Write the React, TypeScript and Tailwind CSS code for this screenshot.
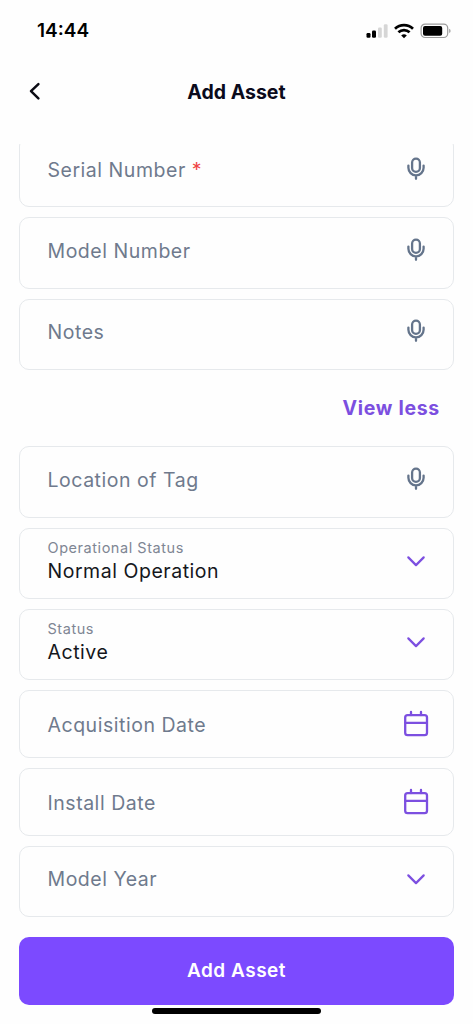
import React from "react";

type FieldKind = "voice" | "select" | "date";

interface FieldProps {
  label: string;
  kind: FieldKind;
  value?: string;
  required?: boolean;
}

// --- Icons ---
const MicIcon = () => (
  <svg width="26" height="26" viewBox="0 0 26 26" fill="none" stroke="#64748b" strokeWidth="2.3" strokeLinecap="round">
    <rect x="9.1" y="2.7" width="7.8" height="13.2" rx="3.9" />
    <path d="M5.4 9.6v2.2a7.6 7.6 0 0 0 15.2 0V9.6M13 19.6v3.2" />
  </svg>
);

const ChevronIcon = () => (
  <svg width="26" height="26" viewBox="0 0 26 26" fill="none" stroke="#7c4fe0" strokeWidth="2.2" strokeLinecap="round" strokeLinejoin="round">
    <path d="M5.3 9.4l7.7 7.7 7.7-7.7" />
  </svg>
);

const CalendarIcon = () => (
  <svg width="26" height="28" viewBox="0 0 26 28" fill="none" stroke="#7c4fe0" strokeWidth="2.3" strokeLinecap="round">
    <rect x="2.2" y="5.2" width="21.8" height="20" rx="2.4" />
    <path d="M2.4 12.8h21.4M8 5V2M18 5V2" />
  </svg>
);

const icons: Record<FieldKind, React.FC> = {
  voice: MicIcon,
  select: ChevronIcon,
  date: CalendarIcon,
};

const Field: React.FC<FieldProps> = ({ label, kind, value, required = false }) => {
  const Icon = icons[kind];
  return (
    <div
      className={`flex shrink-0 items-center justify-between rounded-[10px] border border-[#e6e9ec] pl-[27.5px] pr-6 ${
        kind === "date" ? "h-[68px]" : "h-[71.2px] pb-[5.4px]"
      }`}
    >
      {value ? (
        <div className="flex flex-col">
          <span className="text-[14.5px] leading-[20px] tracking-[0.55px] text-[#7f8694]">{label}</span>
          <span className="text-[19.5px] leading-[26px] tracking-[0.53px] text-[#15171c]">{value}</span>
        </div>
      ) : (
        <span className="pt-px text-[19.5px] leading-[26px] tracking-[0.53px] text-[#6f7a8d]">
          {label} {required && <span className="text-[#ef4444]">*</span>}
        </span>
      )}
      <Icon />
    </div>
  );
};

// --- Status bar ---
const StatusBar = () => (
  <div className="flex h-[60px] shrink-0 items-center justify-between pl-[37px] pr-[21.5px] pt-px">
    <span className="text-[19px] font-semibold leading-6 text-black">14:44</span>
    <div className="flex items-center">
      <svg width="22" height="16" viewBox="0 0 22 16">
        <rect x="0.5" y="10" width="4" height="4.8" rx="1.2" fill="#000" />
        <rect x="6" y="7.6" width="4" height="7.2" rx="1.2" fill="#000" />
        <rect x="12" y="4.6" width="3.8" height="10.2" rx="1.2" fill="#d6d6d6" />
        <rect x="17.8" y="1.2" width="3.8" height="13.6" rx="1.2" fill="#d6d6d6" />
      </svg>
      <svg className="ml-1.5" width="20" height="16" viewBox="0 0 20 16" fill="none" stroke="#000" strokeWidth="2.7">
        <path d="M1 5.8a13 13 0 0 1 18 0" />
        <path d="M4.4 9.3a8.2 8.2 0 0 1 11.2 0" />
        <path d="M10 15.2l-2.8-2.8a4.2 4.2 0 0 1 5.6 0z" fill="#000" stroke="none" />
      </svg>
      <svg className="ml-1.5" width="32" height="16" viewBox="0 0 32 16">
        <rect x="1.1" y="1.1" width="26.6" height="13.4" rx="4" fill="none" stroke="#9c9c9c" strokeWidth="1.2" />
        <rect x="3" y="3" width="19.2" height="9.8" rx="2" fill="#000" />
        <path d="M29.2 5.8v4.2a2.3 2.3 0 0 0 0-4.2z" fill="#9c9c9c" />
      </svg>
    </div>
  </div>
);

const mainFields: FieldProps[] = [
  { label: "Serial Number", kind: "voice", required: true },
  { label: "Model Number", kind: "voice" },
  { label: "Notes", kind: "voice" },
];

const extraFields: FieldProps[] = [
  { label: "Location of Tag", kind: "voice" },
  { label: "Operational Status", kind: "select", value: "Normal Operation" },
  { label: "Status", kind: "select", value: "Active" },
  { label: "Acquisition Date", kind: "date" },
  { label: "Install Date", kind: "date" },
  { label: "Model Year", kind: "select" },
];

const App = () => {
  return (
    <div className="flex h-[1024px] w-full flex-col overflow-hidden bg-[#fefefe] font-['Inter',sans-serif]">
      <StatusBar />

      <header className="grid h-[84px] shrink-0 grid-cols-[1fr_auto_1fr] items-start px-[27px] pt-[18px]">
        <button className="flex h-[26px] items-center" aria-label="Back">
          <svg width="16" height="20" viewBox="0 0 16 20" fill="none" stroke="#0b0b14" strokeWidth="2.5" strokeLinecap="round" strokeLinejoin="round">
            <path d="M11.4 3.1L4 10.2l7.4 7.1" />
          </svg>
        </button>
        <h1 className="pt-px text-[19.5px] font-bold leading-[26px] text-[#0b0b1c]">Add Asset</h1>
      </header>

      {/* Scrolled form, the first field runs under the header */}
      <main className="h-[792.5px] shrink-0 overflow-hidden px-[19px]">
        <div className="-mt-[7.8px] flex flex-col gap-[10px]">
          {mainFields.map((field) => (
            <Field key={field.label} {...field} />
          ))}
        </div>
        <div className="flex h-[76.7px] items-center justify-end pr-3.5">
          <button className="text-[19.5px] font-bold leading-[26px] tracking-[0.7px] text-[#7c4fe0]">View less</button>
        </div>
        <div className="flex flex-col gap-[10px]">
          {extraFields.map((field) => (
            <Field key={field.label} {...field} />
          ))}
        </div>
      </main>

      <footer className="flex flex-col items-center px-[19px]">
        <button className="h-[68px] w-full shrink-0 rounded-[10px] bg-[#7c4aff] pt-0.5 text-[19px] font-semibold tracking-[0.5px] text-white">
          Add Asset
        </button>
        <div className="mt-[3.5px] h-1.5 w-[169px] rounded-full bg-black" />
      </footer>
    </div>
  );
};

export default App;
